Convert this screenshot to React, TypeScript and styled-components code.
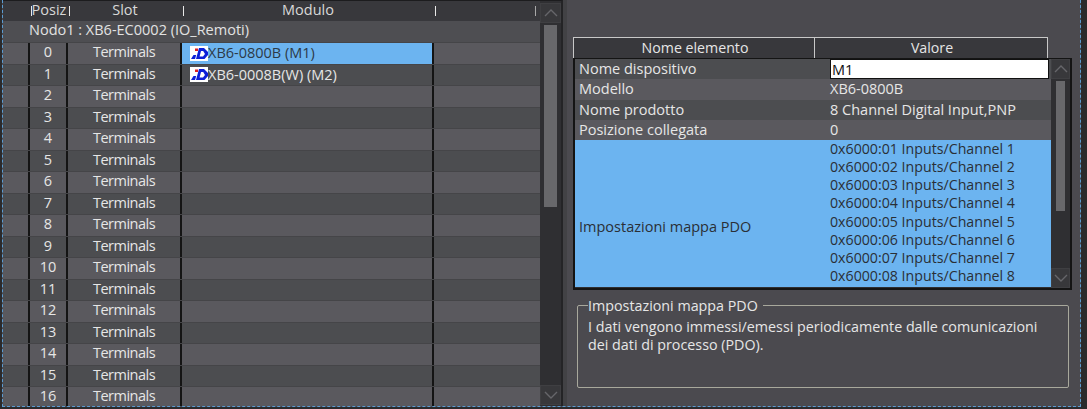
import React from "react";
import styled, { createGlobalStyle } from "styled-components";

const GlobalStyle = createGlobalStyle`
    html, body {
        margin: 0;
        padding: 0;
        background: #2a2a2c;
        overflow: hidden;
    }
    * {
        box-sizing: border-box;
    }
`;

const terminalRows = Array.from({ length: 17 }, (_, i) => i);

const modules: Record<number, string> = {
    0: "XB6-0800B (M1)",
    1: "XB6-0008B(W) (M2)",
};

const properties = [
    { name: "Modello", value: "XB6-0800B" },
    { name: "Nome prodotto", value: "8 Channel Digital Input,PNP" },
    { name: "Posizione collegata", value: "0" },
];

const pdoLines = [1, 2, 3, 4, 5, 6, 7, 8].map(
    (n) => `0x6000:0${n} Inputs/Channel ${n}`
);

function SdLogo() {
    return (
        <LogoSvg viewBox="0 0 18 15">
            <rect width="18" height="15" fill="#fff" />
            <path d="M1 13 L5 13 L6.2 9 L3.5 9 Z" fill="#0b1fd8" />
            <rect x="5" y="2.5" width="3" height="2.5" fill="#e02020" />
            <path
                fillRule="evenodd"
                d="M9 2 H14 L18 6 V9 L14.5 13 H6 Z M11 5 L9.6 10.5 H13 L15 8 L13.2 5 Z"
                fill="#0b1fd8"
            />
        </LogoSvg>
    );
}

function Scrollbar() {
    return (
        <ScrollTrack>
            <ScrollButton>
                <svg width="14" height="8" viewBox="0 0 14 8">
                    <path d="M1 7 L7 1 L13 7" fill="none" stroke="#66666a" strokeWidth="1.4" />
                </svg>
            </ScrollButton>
            <ScrollArea>
                <ScrollThumb />
            </ScrollArea>
            <ScrollButton>
                <svg width="14" height="8" viewBox="0 0 14 8">
                    <path d="M1 1 L7 7 L13 1" fill="none" stroke="#66666a" strokeWidth="1.4" />
                </svg>
            </ScrollButton>
        </ScrollTrack>
    );
}

export default function App() {
    return (
        <>
            <GlobalStyle />
            <Frame>
                <LeftPanel>
                    <TableArea>
                        <HeaderRow>
                            <HeaderCell />
                            <HeaderCell $tick>Posiz</HeaderCell>
                            <HeaderCell $tick>Slot</HeaderCell>
                            <HeaderCell $tick>Modulo</HeaderCell>
                            <HeaderCell $tick />
                        </HeaderRow>
                        <NodeRow>Nodo1 : XB6-EC0002 (IO_Remoti)</NodeRow>
                        {terminalRows.map((i) => (
                            <TerminalRow key={i} $odd={i % 2 === 1}>
                                <Cell />
                                <Cell $center>{i}</Cell>
                                <SlotCell $center>Terminals</SlotCell>
                                <ModuleCell $selected={i === 0}>
                                    {modules[i] && (
                                        <>
                                            <SdLogo />
                                            {modules[i]}
                                        </>
                                    )}
                                </ModuleCell>
                                <Cell />
                            </TerminalRow>
                        ))}
                    </TableArea>
                    <Scrollbar />
                </LeftPanel>
                <RightPanel>
                    <PropHeader>
                        <PropHeaderCell $w={241}>Nome elemento</PropHeaderCell>
                        <PropHeaderCell $w={234}>Valore</PropHeaderCell>
                    </PropHeader>
                    <PropBox>
                        <PropRows>
                            <PropRow>
                                <PropName>Nome dispositivo</PropName>
                                <NameInput defaultValue="M1" />
                            </PropRow>
                            {properties.map((p, i) => (
                                <PropRow key={p.name} $odd={i % 2 === 0}>
                                    <PropName>{p.name}</PropName>
                                    <PropValue>{p.value}</PropValue>
                                </PropRow>
                            ))}
                            <PdoRow>
                                <PdoName>Impostazioni mappa PDO</PdoName>
                                <PdoList>
                                    {pdoLines.map((l) => (
                                        <PdoLine key={l}>{l}</PdoLine>
                                    ))}
                                </PdoList>
                            </PdoRow>
                        </PropRows>
                        <SmallScroll>
                            <Scrollbar />
                        </SmallScroll>
                    </PropBox>
                    <DescBox>
                        <DescLegend>Impostazioni mappa PDO</DescLegend>
                        <DescText>
                            I dati vengono immessi/emessi periodicamente dalle comunicazioni
                            <br />
                            dei dati di processo (PDO).
                        </DescText>
                    </DescBox>
                </RightPanel>
            </Frame>
        </>
    );
}

const Frame = styled.div`
    width: 1079px;
    height: 407px;
    margin-left: 2px;
    display: flex;
    background: #4b4a4f;
    border: 1px dashed #5b9bd0;
    border-top: none;
    font-family: "Open Sans", "Noto Sans", sans-serif;
    font-size: 14.5px;
    color: #e6e6e6;
    overflow: hidden;
`;

const LeftPanel = styled.div`
    width: 560px;
    height: 406px;
    flex: none;
    display: flex;
    border-top: 1px solid #1c1c1e;
    border-right: 2px solid #242426;
    background: #2f2f32;
`;

const TableArea = styled.div`
    width: 537px;
    flex: none;
    overflow: hidden;
`;

const columns = "27px 38px 114px 252px 106px";

const HeaderRow = styled.div`
    display: grid;
    grid-template-columns: ${columns};
    height: 20px;
    background: #38383c;
`;

const HeaderCell = styled.div<{ $tick?: boolean }>`
    position: relative;
    text-align: center;
    line-height: 17px;
    color: #d8d8d8;
    &::before {
        content: "";
        display: ${(p) => (p.$tick ? "block" : "none")};
        position: absolute;
        left: 1px;
        top: 5px;
        width: 1px;
        height: 10px;
        background: #e8e8e8;
    }
    &:last-child::after {
        content: "";
        position: absolute;
        right: 4px;
        top: 5px;
        width: 1px;
        height: 10px;
        background: #a8a8a8;
    }
`;

const NodeRow = styled.div`
    height: 21px;
    padding-left: 26px;
    line-height: 18px;
    background: #4e4e52;
    color: #e2e2e2;
`;

const TerminalRow = styled.div<{ $odd: boolean }>`
    display: grid;
    grid-template-columns: ${columns};
    height: 21.5px;
    background: ${(p) => (p.$odd ? "#4c4d50" : "#5a595e")};
    border-top: 1px solid #454548;
`;

const Cell = styled.div<{ $center?: boolean }>`
    text-align: ${(p) => (p.$center ? "center" : "left")};
    line-height: 18px;
    border-right: 2px solid #141414;
    &:last-child {
        border-right: none;
    }
`;

const SlotCell = styled(Cell)`
    letter-spacing: -0.5px;
`;

const ModuleCell = styled(Cell)<{ $selected: boolean }>`
    display: flex;
    align-items: center;
    padding-left: 8px;
    background: ${(p) => (p.$selected ? "#6cb4f0" : "transparent")};
    color: ${(p) => (p.$selected ? "#2c3a48" : "#e6e6e6")};
`;

const LogoSvg = styled.svg`
    width: 18px;
    height: 15px;
    flex: none;
`;

const ScrollTrack = styled.div`
    flex: 1;
    display: flex;
    flex-direction: column;
    padding: 2px 0 1px;
    background: #2f2f32;
`;

const ScrollButton = styled.div`
    height: 20px;
    flex: none;
    display: flex;
    align-items: center;
    justify-content: center;
    background: #38383b;
    border: 1px solid #3f3f42;
`;

const ScrollArea = styled.div`
    flex: 1;
    padding: 2px 4px 0;
`;

const ScrollThumb = styled.div`
    height: 182px;
    background: #68686b;
`;

const RightPanel = styled.div`
    flex: 1;
    padding: 37px 0 0 6px;
    display: flex;
    flex-direction: column;
    align-items: flex-start;
    border-left: 4px solid #424245;
`;

const PropHeader = styled.div`
    display: flex;
    height: 21px;
`;

const PropHeaderCell = styled.div<{ $w: number }>`
    width: ${(p) => p.$w}px;
    padding-left: 2px;
    text-align: center;
    font-size: 14.2px;
    line-height: 19px;
    background: #38383c;
    border-top: 1px solid #c8c8c8;
    border-left: 1px solid #c8c8c8;
    &:last-child {
        border-right: 1px solid #c8c8c8;
    }
`;

const PropBox = styled.div`
    width: 499px;
    height: 232px;
    display: flex;
    border: 2px solid #141414;
    border-top-width: 1px;
    background: #2f2f32;
`;

const PropRows = styled.div`
    width: 476px;
    flex: none;
`;

const PropRow = styled.div<{ $odd?: boolean }>`
    display: grid;
    grid-template-columns: 255px 1fr;
    height: 20.25px;
    line-height: 19px;
    background: ${(p) => (p.$odd ? "#5a595e" : "#4c4d50")};
`;

const PropName = styled.div`
    padding-left: 4px;
`;

const PdoName = styled(PropName)`
    padding-top: 25px;
`;

const PropValue = styled.div`
    padding-left: 0;
`;

const NameInput = styled.input`
    width: 219px;
    height: 20px;
    margin: 0;
    padding: 0 1px;
    border: 1px solid #111;
    background: #fff;
    color: #111;
    font: inherit;
    outline: none;
`;

const PdoRow = styled.div`
    display: grid;
    grid-template-columns: 255px 1fr;
    align-items: center;
    height: 147px;
    background: #6cb4f0;
    color: #2a2f36;
`;

const PdoList = styled.div`
    display: flex;
    flex-direction: column;
`;

const PdoLine = styled.div`
    height: 18.1px;
    line-height: 15px;
    font-size: 14.2px;
`;

const SmallScroll = styled.div`
    flex: 1;
    display: flex;
    ${ScrollTrack} {
        padding: 0;
    }
    ${ScrollArea} {
        padding: 2px 5px 0;
    }
    ${ScrollThumb} {
        height: 130px;
        margin: 0;
    }
`;

const DescBox = styled.fieldset`
    width: 492px;
    height: 92px;
    margin: 6px 0 0 4px;
    padding: 0 10px;
    border: 1px solid #a8a89c;
    border-radius: 2px;
    font-size: 14.3px;
`;

const DescLegend = styled.legend`
    margin-left: 0;
    padding: 0 5px 0 0;
    line-height: 19px;
`;

const DescText = styled.div`
    line-height: 18px;
    margin-top: 3px;
`;
